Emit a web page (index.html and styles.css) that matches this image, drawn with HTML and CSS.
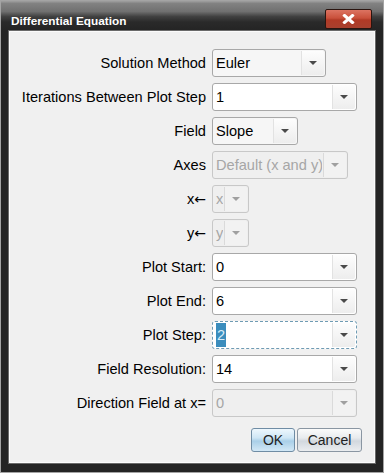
FILE: index.html
```html
<!DOCTYPE html>
<html lang="en">
<head>
  <meta charset="UTF-8">
  <title>Differential Equation</title>
  <link rel="stylesheet" href="styles.css">
</head>
<body>
  <div class="window">
    <div class="titlebar">
      <span class="title">Differential Equation</span>
      <div class="close">
        <svg width="13" height="10" viewBox="0 0 13 10">
          <path d="M2.5 1.5 L10.5 8.5 M10.5 1.5 L2.5 8.5" stroke="#fff" stroke-width="3" stroke-linecap="square"/>
        </svg>
      </div>
    </div>

    <div class="panel">
      <div class="form">
        <label>Solution Method</label>
        <div class="combo readonly w-method"><span class="value">Euler</span><span class="arrow"></span></div>

        <label>Iterations Between Plot Step</label>
        <div class="combo w-full"><span class="value">1</span><span class="arrow"></span></div>

        <label>Field</label>
        <div class="combo readonly w-field"><span class="value">Slope</span><span class="arrow"></span></div>

        <label>Axes</label>
        <div class="combo disabled w-axes"><span class="value">Default (x and y)</span><span class="arrow"></span></div>

        <label>x<span class="larr">&#8592;</span></label>
        <div class="combo disabled w-var"><span class="value">x</span><span class="arrow"></span></div>

        <label>y<span class="larr">&#8592;</span></label>
        <div class="combo disabled w-var"><span class="value">y</span><span class="arrow"></span></div>

        <label>Plot Start:</label>
        <div class="combo w-full"><span class="value">0</span><span class="arrow"></span></div>

        <label>Plot End:</label>
        <div class="combo w-full"><span class="value">6</span><span class="arrow"></span></div>

        <label>Plot Step:</label>
        <div class="combo focused w-full"><span class="value"><span class="selected">2</span></span><span class="arrow"></span></div>

        <label>Field Resolution:</label>
        <div class="combo w-full"><span class="value">14</span><span class="arrow"></span></div>

        <label>Direction Field at x=</label>
        <div class="combo disabled w-full"><span class="value">0</span><span class="arrow"></span></div>
      </div>

      <div class="actions">
        <button class="btn btn-ok">OK</button>
        <button class="btn btn-cancel">Cancel</button>
      </div>
    </div>
  </div>
</body>
</html>
```

FILE: styles.css
```css
* {
  box-sizing: border-box;
}

body {
  margin: 0;
  background-color: #222;
  font-family: "Liberation Sans", Arial, sans-serif;
}

.window {
  width: 384px;
  height: 473px;
  border: 1px solid #a4a4a4;
  background-color: #242424;
  display: flex;
  flex-direction: column;
}

.titlebar {
  height: 30px;
  display: flex;
  justify-content: space-between;
  align-items: flex-start;
  padding: 0 11px 0 10px;
  background: linear-gradient(#a0a0a0 0, #828282 8%, #707070 35%, #404040 52%, #2a2a2a 70%, #242424 100%);
}

.title {
  margin-top: 12px;
  font-size: 11.8px;
  line-height: 16px;
  font-weight: bold;
  color: #fff;
}

.close {
  margin-top: 8px;
  width: 47px;
  height: 20px;
  border: 1px solid #2a1510;
  border-radius: 2px;
  background: linear-gradient(#dc7462 0, #c9503b 45%, #b13a26 55%, #a8402e 100%);
  display: flex;
  align-items: center;
  justify-content: center;
}

.panel {
  flex: 1;
  margin: 0 8px 9px 8px;
  background-color: #f0f0f0;
  border: 1px solid #fbfbfb;
  box-shadow: 0 0 0 1px #6a6a6a;
  padding: 17px 12px 0 0;
}

.form {
  display: grid;
  grid-template-columns: 196px auto;
  grid-auto-rows: 28px;
  column-gap: 6px;
  row-gap: 6px;
  justify-items: start;
}

label {
  justify-self: end;
  align-self: center;
  font-size: 14.6px;
  color: #000;
  white-space: nowrap;
}

.larr {
  font-family: "DejaVu Sans", sans-serif;
  font-size: 14px;
}

.combo {
  height: 28px;
  display: flex;
  border: 1px solid #a8a8a8;
  border-radius: 3px;
  background-color: #fff;
  font-size: 14.6px;
  color: #000;
}

.combo .value {
  flex: 1;
  padding-left: 3px;
  line-height: 26px;
  white-space: nowrap;
  overflow: hidden;
}

.combo .arrow {
  width: 23px;
  margin: 1px;
  border-left: 1px solid #e2e2e2;
  border-radius: 0 2px 2px 0;
  background: linear-gradient(#fdfdfd, #ededed);
  display: flex;
  align-items: center;
  justify-content: center;
}

.combo .arrow::after {
  content: "";
  border-left: 4px solid transparent;
  border-right: 4px solid transparent;
  border-top: 4px solid #4a4a4a;
}

.combo.readonly {
  background-color: #f6f6f6;
}

.combo.disabled {
  border-color: #c8c8c8;
  background-color: #efefef;
  color: #a6a6a6;
}

.combo.disabled .arrow {
  border-left-color: #dadada;
  background: #f2f2f2;
}

.combo.disabled .arrow::after {
  border-top-color: #a0a0a0;
}

.combo.focused {
  border: 1px dashed #6f9bb3;
}

.combo .selected {
  display: inline-block;
  padding: 0 1px;
  background-color: #3b8dbd;
  color: #d8ecf8;
  line-height: 24px;
}

.w-method { width: 114px; }
.w-full { width: 145px; }
.w-field { width: 86px; }
.w-axes { width: 136px; }
.w-var { width: 37px; }

.actions {
  display: flex;
  justify-content: flex-end;
  gap: 2px;
  margin-top: 11px;
}

.btn {
  height: 24px;
  border-radius: 3px;
  font-family: "Liberation Sans", Arial, sans-serif;
  font-size: 14px;
  color: #222;
  padding: 0;
}

.btn-ok {
  width: 44px;
  border: 1px solid #6f8ca4;
  background: linear-gradient(#eef7fd 0, #cfe6f5 40%, #a9cfe8 55%, #d2e8f6 100%);
}

.btn-cancel {
  width: 65px;
  border: 1px solid #8a96a2;
  background: linear-gradient(#fbfbfb 0, #e8ebee 40%, #d2d8de 55%, #ebedef 100%);
}
```
